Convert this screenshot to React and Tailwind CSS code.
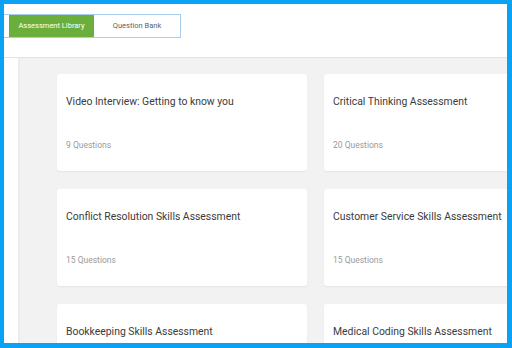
const cards = [
  { title: 'Video Interview: Getting to know you', count: 9 },
  { title: 'Critical Thinking Assessment', count: 20 },
  { title: 'Conflict Resolution Skills Assessment', count: 15 },
  { title: 'Customer Service Skills Assessment', count: 15 },
  { title: 'Bookkeeping Skills Assessment', count: 12 },
  { title: 'Medical Coding Skills Assessment', count: 10 },
]

function Card({ title, count }) {
  return (
    <div className="h-[97px] shrink-0 rounded-[3px] bg-white px-[9px] pt-[21px] shadow-[0_1px_2px_rgba(0,0,0,0.06)]">
      <div className="text-[10.4px] leading-[14px] text-[#3b3b3b]">{title}</div>
      <div className="mt-[30px] text-[8.5px] leading-[12px] text-[#9a9a9a]">{count} Questions</div>
    </div>
  )
}

export default function App() {
  return (
    <div className="w-[512px] h-[348px] bg-[#0aa2f5] pt-[4px] pl-[4px] pr-[5px] pb-[5px] font-['Roboto',sans-serif]">
      <div className="flex h-full flex-col overflow-hidden bg-white">
        {/* header with tabs */}
        <div className="flex h-[54px] shrink-0 items-start border-b border-[#e3e3e3] pt-[10px]">
          <div className="flex h-[24px] border border-l-0 border-[#a9cdee]">
            <div className="w-[5px]" />
            <div className="flex w-[85px] items-center justify-center bg-[#6aae3c] text-[7.5px] text-white">
              Assessment Library
            </div>
            <div className="flex w-[86px] items-center justify-center text-[7.5px] text-[#5a5f6a]">
              Question Bank
            </div>
          </div>
        </div>
        {/* body */}
        <div className="flex min-h-0 flex-1">
          <div className="w-[16px] shrink-0 border-r-2 border-[#ececec] bg-white" />
          <div className="flex-1 bg-[#f2f2f2] pl-[37px] pt-[16px]">
            <div className="grid grid-cols-[250px_250px] gap-x-[17px] gap-y-[18px]">
              {cards.map((c) => (
                <Card key={c.title} {...c} />
              ))}
            </div>
          </div>
        </div>
      </div>
    </div>
  )
}
